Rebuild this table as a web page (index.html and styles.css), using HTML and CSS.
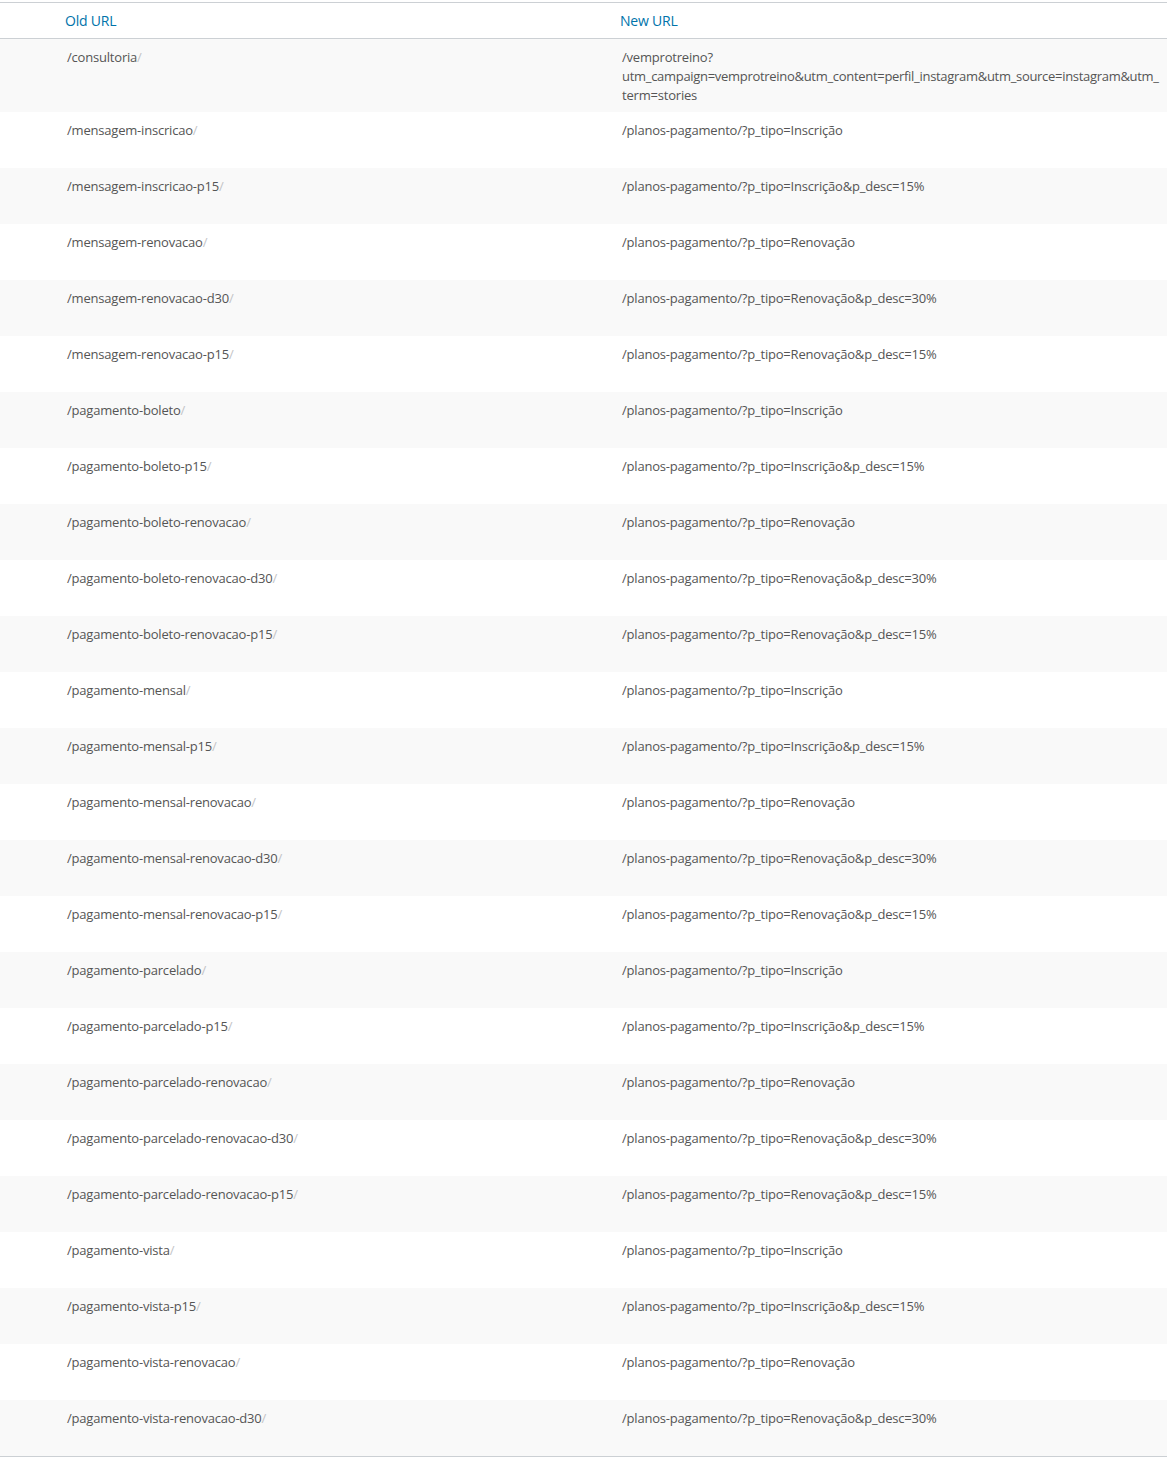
FILE: index.html
```html
<!DOCTYPE html>
<html lang="en">
<head>
    <meta charset="UTF-8">
    <meta name="viewport" content="width=device-width, initial-scale=1.0">
    <title>Redirects</title>
    <link rel="stylesheet" href="styles.css">
</head>
<body>
    <table class="redirects">
        <colgroup>
            <col class="col-check">
            <col class="col-old">
            <col class="col-new">
        </colgroup>
        <thead>
            <tr>
                <th></th>
                <th><a href="#">Old URL</a></th>
                <th><a href="#">New URL</a></th>
            </tr>
        </thead>
        <tbody>
            <tr>
                <td></td>
                <td>/consultoria<span class="slash">/</span></td>
                <td>/vemprotreino?<br><span class="nowrap">utm_campaign=vemprotreino&amp;utm_content=perfil_instagram&amp;utm_source=instagram&amp;utm_</span><br>term=stories</td>
            </tr>
            <tr><td></td><td>/mensagem-inscricao<span class="slash">/</span></td><td>/planos-pagamento/?p_tipo=Inscrição</td></tr>
            <tr><td></td><td>/mensagem-inscricao-p15<span class="slash">/</span></td><td>/planos-pagamento/?p_tipo=Inscrição&amp;p_desc=15%</td></tr>
            <tr><td></td><td>/mensagem-renovacao<span class="slash">/</span></td><td>/planos-pagamento/?p_tipo=Renovação</td></tr>
            <tr><td></td><td>/mensagem-renovacao-d30<span class="slash">/</span></td><td>/planos-pagamento/?p_tipo=Renovação&amp;p_desc=30%</td></tr>
            <tr><td></td><td>/mensagem-renovacao-p15<span class="slash">/</span></td><td>/planos-pagamento/?p_tipo=Renovação&amp;p_desc=15%</td></tr>
            <tr><td></td><td>/pagamento-boleto<span class="slash">/</span></td><td>/planos-pagamento/?p_tipo=Inscrição</td></tr>
            <tr><td></td><td>/pagamento-boleto-p15<span class="slash">/</span></td><td>/planos-pagamento/?p_tipo=Inscrição&amp;p_desc=15%</td></tr>
            <tr><td></td><td>/pagamento-boleto-renovacao<span class="slash">/</span></td><td>/planos-pagamento/?p_tipo=Renovação</td></tr>
            <tr><td></td><td>/pagamento-boleto-renovacao-d30<span class="slash">/</span></td><td>/planos-pagamento/?p_tipo=Renovação&amp;p_desc=30%</td></tr>
            <tr><td></td><td>/pagamento-boleto-renovacao-p15<span class="slash">/</span></td><td>/planos-pagamento/?p_tipo=Renovação&amp;p_desc=15%</td></tr>
            <tr><td></td><td>/pagamento-mensal<span class="slash">/</span></td><td>/planos-pagamento/?p_tipo=Inscrição</td></tr>
            <tr><td></td><td>/pagamento-mensal-p15<span class="slash">/</span></td><td>/planos-pagamento/?p_tipo=Inscrição&amp;p_desc=15%</td></tr>
            <tr><td></td><td>/pagamento-mensal-renovacao<span class="slash">/</span></td><td>/planos-pagamento/?p_tipo=Renovação</td></tr>
            <tr><td></td><td>/pagamento-mensal-renovacao-d30<span class="slash">/</span></td><td>/planos-pagamento/?p_tipo=Renovação&amp;p_desc=30%</td></tr>
            <tr><td></td><td>/pagamento-mensal-renovacao-p15<span class="slash">/</span></td><td>/planos-pagamento/?p_tipo=Renovação&amp;p_desc=15%</td></tr>
            <tr><td></td><td>/pagamento-parcelado<span class="slash">/</span></td><td>/planos-pagamento/?p_tipo=Inscrição</td></tr>
            <tr><td></td><td>/pagamento-parcelado-p15<span class="slash">/</span></td><td>/planos-pagamento/?p_tipo=Inscrição&amp;p_desc=15%</td></tr>
            <tr><td></td><td>/pagamento-parcelado-renovacao<span class="slash">/</span></td><td>/planos-pagamento/?p_tipo=Renovação</td></tr>
            <tr><td></td><td>/pagamento-parcelado-renovacao-d30<span class="slash">/</span></td><td>/planos-pagamento/?p_tipo=Renovação&amp;p_desc=30%</td></tr>
            <tr><td></td><td>/pagamento-parcelado-renovacao-p15<span class="slash">/</span></td><td>/planos-pagamento/?p_tipo=Renovação&amp;p_desc=15%</td></tr>
            <tr><td></td><td>/pagamento-vista<span class="slash">/</span></td><td>/planos-pagamento/?p_tipo=Inscrição</td></tr>
            <tr><td></td><td>/pagamento-vista-p15<span class="slash">/</span></td><td>/planos-pagamento/?p_tipo=Inscrição&amp;p_desc=15%</td></tr>
            <tr><td></td><td>/pagamento-vista-renovacao<span class="slash">/</span></td><td>/planos-pagamento/?p_tipo=Renovação</td></tr>
            <tr><td></td><td>/pagamento-vista-renovacao-d30<span class="slash">/</span></td><td>/planos-pagamento/?p_tipo=Renovação&amp;p_desc=30%</td></tr>
        </tbody>
    </table>
</body>
</html>
```

FILE: styles.css
```css
body {
    margin: 0;
    padding-top: 2px;
    background: #fff;
    font-family: 'Open Sans', 'Noto Sans', sans-serif;
    font-size: 13px;
    letter-spacing: -0.2px;
    color: #555;
}

.redirects {
    width: 100%;
    table-layout: fixed;
    border-collapse: collapse;
    border-top: 1px solid #ccd0d4;
    border-bottom: 1px solid #ccd0d4;
}

.col-check {
    width: 55px;
}

.col-old {
    width: 555px;
}

.redirects th {
    text-align: left;
    font-weight: 400;
    font-size: 14px;
    line-height: 19px;
    padding: 8px 10px;
    border-bottom: 1px solid #ccd0d4;
}

.redirects th a {
    color: #0073aa;
    text-decoration: none;
}

.redirects tbody tr {
    height: 56px;
}

.redirects tbody tr:nth-child(odd) {
    background: #f9f9f9;
}

.redirects td {
    vertical-align: top;
    line-height: 19px;
    padding: 9px 10px 7px 12px;
    overflow-wrap: break-word;
}

.nowrap {
    white-space: nowrap;
    letter-spacing: -0.3px;
}

.slash {
    color: #c3c4c7;
}
```
